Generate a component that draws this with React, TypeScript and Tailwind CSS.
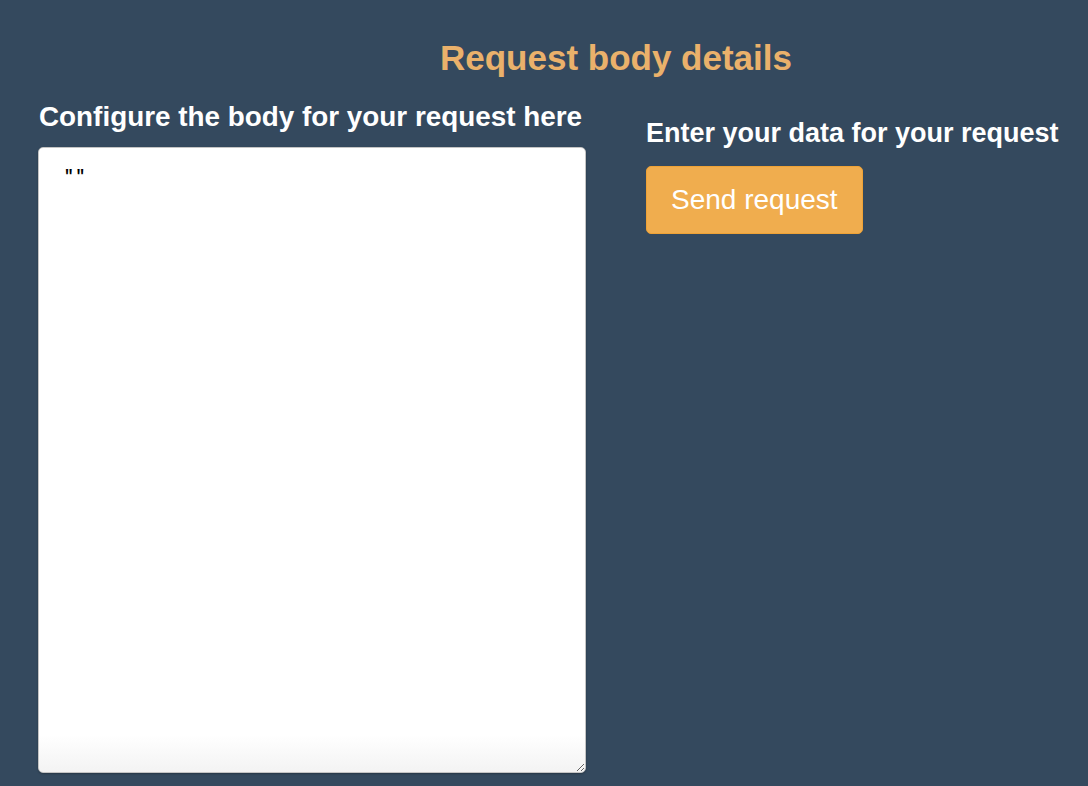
export default function App() {
  return (
    <div className="min-h-[786px] w-full bg-[#34495e] font-['Liberation_Sans',Arial,sans-serif] overflow-hidden">
      <h1 className="pt-[38px] pl-[144px] text-center text-[35px] leading-[40px] font-bold text-[#eab16b]">
        Request body details
      </h1>

      <div className="flex gap-[60px] pl-[38px] pt-[23px]">
        <div className="w-[548px] flex flex-col">
          <h2 className="text-[27.85px] leading-[32px] font-bold text-white pl-px">
            Configure the body for your request here
          </h2>
          <textarea
            defaultValue={'""'}
            className="mt-[14px] h-[626px] w-[548px] resize rounded-[5px] border border-[#c4c4c4] bg-linear-to-b from-white from-94% to-[#f3f3f3] px-[25px] py-[17px] font-['Liberation_Mono',monospace] text-[16px] tracking-[2px] font-bold text-black shadow-[0_1px_2px_rgba(0,0,0,0.25)] outline-none"
          />
        </div>

        <div className="flex flex-col items-start pt-[16px]">
          <h3 className="text-[27px] leading-[32px] font-bold text-white">
            Enter your data for your request
          </h3>
          <button className="mt-[17px] h-[68px] rounded-[5px] border border-[#eea236] bg-[#f0ad4e] px-[24px] text-[28px] leading-[32px] text-white">
            Send request
          </button>
        </div>
      </div>
    </div>
  );
}
